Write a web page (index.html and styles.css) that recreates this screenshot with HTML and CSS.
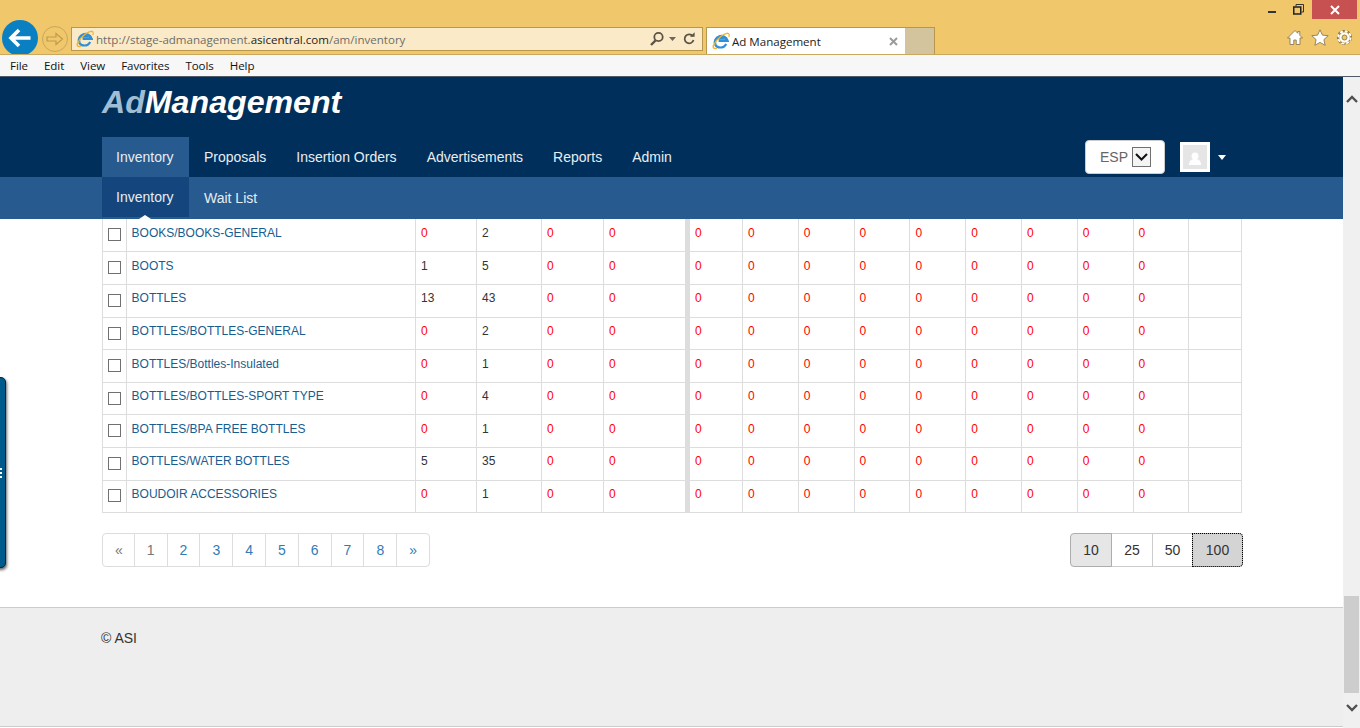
FILE: index.html
```html
<!DOCTYPE html>
<html lang="en">
<head>
<meta charset="utf-8">
<title>Ad Management</title>
<link rel="stylesheet" href="styles.css">
</head>
<body>
<svg class="defs" width="0" height="0" aria-hidden="true">
  <symbol id="ie" viewBox="0 0 18 18">
    <path d="M3.2 12.5A6.4 6.4 0 1 1 15.4 8.6H6.6" fill="none" stroke="#2f8fd8" stroke-width="2.6"/>
    <path d="M6 6.1h6.6M3.2 12.5c1.6 3.8 8.4 4.4 11-.6" fill="none" stroke="#2f8fd8" stroke-width="2.2"/>
    <path d="M16.5 1.6c-3.2-1.2-11.6 4.4-15 11.6-.9 2.4.2 4 3.4 3" fill="none" stroke="#efb52c" stroke-width="1.4"/>
    <path d="M14 1.5c3-.8 3.8.8 2.8 3.5" fill="none" stroke="#efb52c" stroke-width="1.2"/>
  </symbol>
</svg>
<header class="chrome">
  <div class="titlebar">
    <span class="win win-min"><svg width="8" height="2"><rect width="8" height="2" fill="#333"/></svg></span>
    <span class="win win-restore"><svg width="11" height="11" viewBox="0 0 11 11"><path d="M3 2.5V.5h7.5V8H8.5" fill="none" stroke="#333"/><rect x=".75" y="3" width="7" height="7" fill="none" stroke="#222" stroke-width="1.5"/></svg></span>
    <span class="win win-close"><svg width="10" height="10" viewBox="0 0 10 10"><path d="M1 1l8 8M9 1l-8 8" stroke="#fff" stroke-width="2"/></svg></span>
  </div>
  <div class="toolbar">
    <span class="nav-back"><svg width="24" height="20" viewBox="0 0 24 20"><path d="M11 2l-8 8 8 8M3.5 10h19" fill="none" stroke="#fff" stroke-width="3.6"/></svg></span>
    <span class="nav-forward"><svg width="18" height="14" viewBox="0 0 18 14"><path d="M1 5h9V1.500L16.500 7 10 12.500V9H1z" fill="none" stroke="#bf9b4c" stroke-width="1.200"/></svg></span>
    <div class="address">
      <svg class="ie-icon" width="18" height="18"><use href="#ie"/></svg>
      <span class="url">http://stage-admanagement.<b>asicentral.com</b>/am/inventory</span>
      <svg class="addr-search" width="16" height="16" viewBox="0 0 16 16"><circle cx="9.5" cy="6" r="4.2" fill="none" stroke="#5b5443" stroke-width="1.8"/><path d="M6.5 9.5L2 14" stroke="#5b5443" stroke-width="2.4"/></svg>
      <svg class="addr-drop" width="7" height="4"><path d="M0 0h7L3.5 4z" fill="#6f6856"/></svg>
      <svg class="addr-refresh" width="14" height="14" viewBox="0 0 14 14"><path d="M10.8 4.2A4.5 4.5 0 1 0 11.5 8" fill="none" stroke="#5b5443" stroke-width="1.8"/><path d="M8 4.7h4.6V.2z" fill="#5b5443"/></svg>
    </div>
    <div class="tab">
      <svg class="ie-icon" width="18" height="18"><use href="#ie"/></svg>
      <span class="tab-title">Ad Management</span>
      <svg class="tab-close" width="9" height="9" viewBox="0 0 9 9"><path d="M1 1l7 7M8 1L1 8" stroke="#9b9b9b" stroke-width="2"/></svg>
    </div>
    <div class="new-tab"></div>
    <div class="tools">
      <svg width="18" height="17" viewBox="0 0 18 17"><path d="M9 1.5L1.5 9H4v6.5h3.8V11h2.4v4.5H14V9h2.5L13.8 6.3V2.5h-2v1.8z" fill="#fff" stroke="#8b7a55" stroke-width=".9"/></svg>
      <svg width="18" height="17" viewBox="0 0 18 17"><path d="M9 .8l2.4 5.3 5.8.6-4.3 3.900 1.200 5.700L9 13.400l-5.100 2.900 1.200-5.700L.8 6.700l5.800-.6z" fill="#fff" stroke="#8b7a55" stroke-width=".9"/></svg>
      <svg width="17" height="17" viewBox="0 0 17 17"><circle cx="8.5" cy="8.5" r="6.9" fill="none" stroke="#8b7a55" stroke-width="1.4" stroke-dasharray="3 2"/><circle cx="8.5" cy="8.5" r="5.8" fill="none" stroke="#8b7a55" stroke-width="1"/><circle cx="8.5" cy="8.5" r="6.2" fill="none" stroke="#fff" stroke-width="1.8" stroke-dasharray="2.8 2"/><circle cx="8.5" cy="8.5" r="4" fill="none" stroke="#fff" stroke-width="2.2"/><circle cx="8.5" cy="8.5" r="2.4" fill="none" stroke="#8b7a55" stroke-width=".8"/></svg>
    </div>
  </div>
  <nav class="menubar">
    <span>File</span><span>Edit</span><span>View</span><span>Favorites</span><span>Tools</span><span>Help</span>
  </nav>
</header>

<div class="viewport">
  <div class="page">
    <div class="side-tab"><span></span><span></span><span></span></div>
    <div class="app-head">
      <div class="logo"><span class="logo-ad">Ad</span>Management</div>
      <div class="main-nav">
        <a class="main-link is-active">Inventory</a>
        <a class="main-link">Proposals</a>
        <a class="main-link">Insertion Orders</a>
        <a class="main-link">Advertisements</a>
        <a class="main-link">Reports</a>
        <a class="main-link">Admin</a>
        <div class="lang">
          <span class="lang-text">ESP</span>
          <span class="lang-arrow"><svg width="13" height="8" viewBox="0 0 13 8"><path d="M1 1l5.5 5.5L12 1" fill="none" stroke="#111" stroke-width="2"/></svg></span>
        </div>
        <div class="avatar"><svg width="24" height="24" viewBox="0 0 24 24"><circle cx="12" cy="11" r="3.5" fill="#fff"/><path d="M6 20c0-4 2-6 6-6s6 2 6 6z" fill="#fff"/></svg></div>
        <span class="avatar-caret"></span>
      </div>
      <div class="sub-nav">
        <a class="sub-link is-active">Inventory</a>
        <a class="sub-link">Wait List</a>
      </div>
    </div>

    <main class="content">
      <table class="grid">
        <colgroup>
          <col class="c-check"><col class="c-name"><col class="c-a"><col class="c-b"><col class="c-c"><col class="c-d"><col class="c-m1"><col class="c-m"><col class="c-m"><col class="c-m"><col class="c-m"><col class="c-m"><col class="c-m"><col class="c-m"><col class="c-m"><col class="c-last">
        </colgroup>
        <tbody id="rows"></tbody>
      </table>

      <div class="table-foot">
        <ul class="pagination">
          <li class="muted">«</li><li class="muted">1</li><li>2</li><li>3</li><li>4</li><li>5</li><li>6</li><li>7</li><li>8</li><li>»</li>
        </ul>
        <div class="page-size">
          <span class="size size-10">10</span><span class="size size-25">25</span><span class="size size-50">50</span><span class="size size-100">100</span>
        </div>
      </div>
    </main>

    <footer class="footer">© ASI</footer>
  </div>
  <aside class="scrollbar">
    <svg class="sb-arrow" width="12" height="8" viewBox="0 0 12 8"><path d="M1 7l5-5 5 5" fill="none" stroke="#505050" stroke-width="2.4"/></svg>
    <span class="sb-thumb"></span>
    <svg class="sb-arrow" width="12" height="8" viewBox="0 0 12 8"><path d="M1 1l5 5 5-5" fill="none" stroke="#505050" stroke-width="2.4"/></svg>
  </aside>
</div>
<script src="app.js"></script>
</body>
</html>
```
FILE: app.js
```js
var data = [
  ["BOOKS/BOOKS-GENERAL", 0, 2],
  ["BOOTS", 1, 5],
  ["BOTTLES", 13, 43],
  ["BOTTLES/BOTTLES-GENERAL", 0, 2],
  ["BOTTLES/Bottles-Insulated", 0, 1],
  ["BOTTLES/BOTTLES-SPORT TYPE", 0, 4],
  ["BOTTLES/BPA FREE BOTTLES", 0, 1],
  ["BOTTLES/WATER BOTTLES", 5, 35],
  ["BOUDOIR ACCESSORIES", 0, 1]
];
function cell(v, cls) {
  return '<td class="' + (cls || '') + (v === 0 ? ' zero' : '') + '">' + v + '</td>';
}
document.getElementById('rows').innerHTML = data.map(function (r) {
  var h = '<tr><td class="check-cell"><input class="check" type="checkbox"></td>';
  h += '<td class="name-cell"><a class="name">' + r[0] + '</a></td>';
  h += cell(r[1]) + cell(r[2]) + cell(0) + cell(0, 'divider');
  for (var i = 0; i < 9; i++) h += cell(0);
  return h + '<td></td></tr>';
}).join('');
```
FILE: styles.css
```css
* { box-sizing: border-box; }
html, body { margin: 0; height: 100%; overflow: hidden; }
body { font-family: "Liberation Sans", Arial, sans-serif; font-size: 14px; color: #333; background: #fff; }
.defs { position: absolute; }

/* Browser frame */
.chrome { height: 77px; display: flex; flex-direction: column; background: #f0c76a; }
.titlebar { height: 20px; display: flex; justify-content: flex-end; padding-right: 3px; }
.win { display: flex; align-items: center; justify-content: center; height: 19px; }
.win-min { width: 20px; margin-right: 5px; padding-top: 5px; }
.win-restore { width: 22px; margin-right: 3px; }
.win-close { width: 45px; background: #c75050; }
.toolbar { height: 35px; display: flex; align-items: flex-start; overflow: hidden; padding-left: 2px; border-bottom: 1px solid #c9a95f; }
.nav-back { width: 36px; height: 36px; border-radius: 50%; background: #0a80c3; display: flex; align-items: center; justify-content: center; flex: none; }
.nav-forward { width: 26px; height: 26px; margin: 6px 3px 0 4px; border: 1px solid #c9a75c; border-radius: 50%; display: flex; align-items: center; justify-content: center; flex: none; }
.address { width: 632px; height: 24px; margin: 7px 3px 0 0; background: #fbeac8; border: 1px solid #b8974d; display: flex; align-items: center; padding: 0 6px 0 4px; flex: none; }
.ie-icon { flex: none; }
.url { margin-left: 2px; font: 11.55px "Open Sans", sans-serif; color: #6d6d66; flex: 1; white-space: nowrap; }
.url b { font-weight: 400; color: #222; }
.addr-drop { margin: 0 6px 0 4px; }
.tab { width: 200px; height: 27px; margin-top: 7px; background: #fff; border: 1px solid #b8974d; border-bottom: 0; display: flex; align-items: center; padding: 0 6px 0 5px; flex: none; }
.tab-title { margin-left: 2px; font: 11.55px "Open Sans", sans-serif; color: #222; flex: 1; }
.tab-close { margin-right: 1px; }
.new-tab { width: 30px; height: 27px; margin-top: 7px; margin-left: -1px; background: #d3c49e; border: 1px solid #b8974d; border-left: 0; border-bottom: 0; flex: none; }
.tools { margin-left: auto; margin-top: 9px; margin-right: 7px; display: flex; gap: 7px; }
.menubar { height: 22px; background: #f7f7f7; border-bottom: 1px solid #505a68; display: flex; align-items: center; padding: 0 0 1px 10px; gap: 16px; font: 11.55px "Open Sans", sans-serif; letter-spacing: -.07px; color: #111; }

/* Viewport */
.viewport { height: 651px; display: flex; }
.page { width: 1343px; height: 651px; overflow: hidden; position: relative; display: flex; flex-direction: column; }
.scrollbar { width: 17px; background: #f0f0f0; display: flex; flex-direction: column; align-items: center; padding: 18px 0 16px; }
.sb-thumb { width: 15px; height: 97px; margin-top: auto; margin-bottom: 11px; background: #cdcdcd; }
.side-tab { position: absolute; left: -8px; top: 300px; width: 14px; height: 191px; background: #005a8c; border: 1px solid #10202c; border-radius: 5px; box-shadow: 1px 2px 3px rgba(0,0,0,.6); display: flex; flex-direction: column; align-items: flex-end; justify-content: center; gap: 2px; }
.side-tab span { width: 4px; height: 2px; background: #fff; margin-right: 3px; }

/* App header */
.app-head { background: #002f5b; flex: none; }
.logo { height: 60px; padding: 6px 0 0 102px; font-size: 32.15px; line-height: 38px; font-weight: 700; font-style: italic; color: #fff; }
.logo-ad { color: #9fbdd3; }
.main-nav { height: 40px; padding-left: 102px; display: flex; align-items: center; }
.main-link { height: 40px; padding: 0 15px; line-height: 40px; color: #e8edf2; }
.main-link:first-child { padding: 0 15.4px 0 14px; }
.main-link.is-active { background: #275a8f; }
.lang { width: 80px; height: 34px; margin-left: auto; background: #fff; border: 1px solid #ccc; border-radius: 4px; display: flex; align-items: center; padding-left: 14px; color: #666; }
.lang-arrow { width: 19px; height: 20px; margin-left: 4px; border: 1px solid #707070; display: flex; align-items: center; justify-content: center; background: #f4f4f4; }
.avatar { width: 30px; height: 30px; margin-left: 15px; border: 3px solid #fff; background: #e5e5e5; display: flex; align-items: center; justify-content: center; }
.avatar-caret { width: 0; height: 0; margin: 0 117px 0 8px; border: 4px solid transparent; border-top: 5px solid #fff; border-bottom: 0; }
.sub-nav { height: 42px; padding-left: 102px; background: #275a8f; display: flex; align-items: flex-start; }
.sub-link { height: 40px; padding: 0 15px; line-height: 42px; color: #e8edf2; position: relative; }
.sub-link.is-active { background: #14467d; line-height: 40px; padding: 0 15.4px 0 14px; }
.sub-link.is-active::after { content: ""; position: absolute; left: 37px; bottom: -2px; border: 6px solid transparent; border-top: 0; border-bottom: 4px solid #fff; }

/* Table */
.content { flex: none; height: 388px; padding: 0 101px 0 102px; }
.grid { width: 1139px; margin-top: .25px; table-layout: fixed; border-collapse: collapse; font-size: 12px; }
.grid tr { height: 32.6px; }
.grid td { border: 1px solid #ddd; border-top: 0; padding: 6.4px 5px 0 5px; vertical-align: top; line-height: 14px; color: #333; }
.grid td.zero { color: #f00; }
.grid td.divider { border-right: 5px solid #ddd; }
.grid td.name-cell { padding-left: 4.6px; }
.c-check { width: 24px; } .c-name { width: 289px; } .c-a { width: 61px; } .c-b { width: 65px; } .c-c { width: 62px; } .c-d { width: 84px; }
.c-m1 { width: 55px; } .c-m { width: 55.8px; } .c-last { width: 52.6px; }
.grid td.check-cell { padding: 0; text-align: center; }
.check { appearance: none; width: 13px; height: 13px; margin: 8.97px 0 0; background: #fff; border: 1px solid #707070; border-radius: 0; display: inline-block; }
.name { color: #175d8f; }

.table-foot { margin-top: 20px; display: flex; justify-content: space-between; }
.pagination { list-style: none; margin: 0; padding: 0; height: 34px; display: flex; background: #fff; }
.pagination li { height: 34px; padding: 0 12px; line-height: 32px; border: 1px solid #ddd; margin-left: -1px; color: #337ab7; }
.pagination li:first-child { margin-left: 0; padding-right: 11px; border-radius: 4px 0 0 4px; }
.pagination li:last-child { border-radius: 0 4px 4px 0; }
.pagination li.muted { color: #777; }
.page-size { display: flex; height: 34px; margin-right: -1px; }
.size { height: 34px; line-height: 32px; text-align: center; border: 1px solid #ccc; margin-left: -1px; color: #333; }
.size-10 { width: 42px; background: #e6e6e6; border-color: #adadad; border-radius: 4px 0 0 4px; position: relative; }
.size-25 { width: 42px; }
.size-50 { width: 41px; }
.size-100 { width: 51px; background: #d4d4d4; border-color: #adadad; border-radius: 0 4px 4px 0; outline: 1px dotted #000; outline-offset: -1px; }

.footer { height: 120px; flex: none; border-top: 1px solid #ccc; border-bottom: 1px solid #ccc; background: #eee; padding: 22px 0 0 101px; line-height: 16px; }
```
